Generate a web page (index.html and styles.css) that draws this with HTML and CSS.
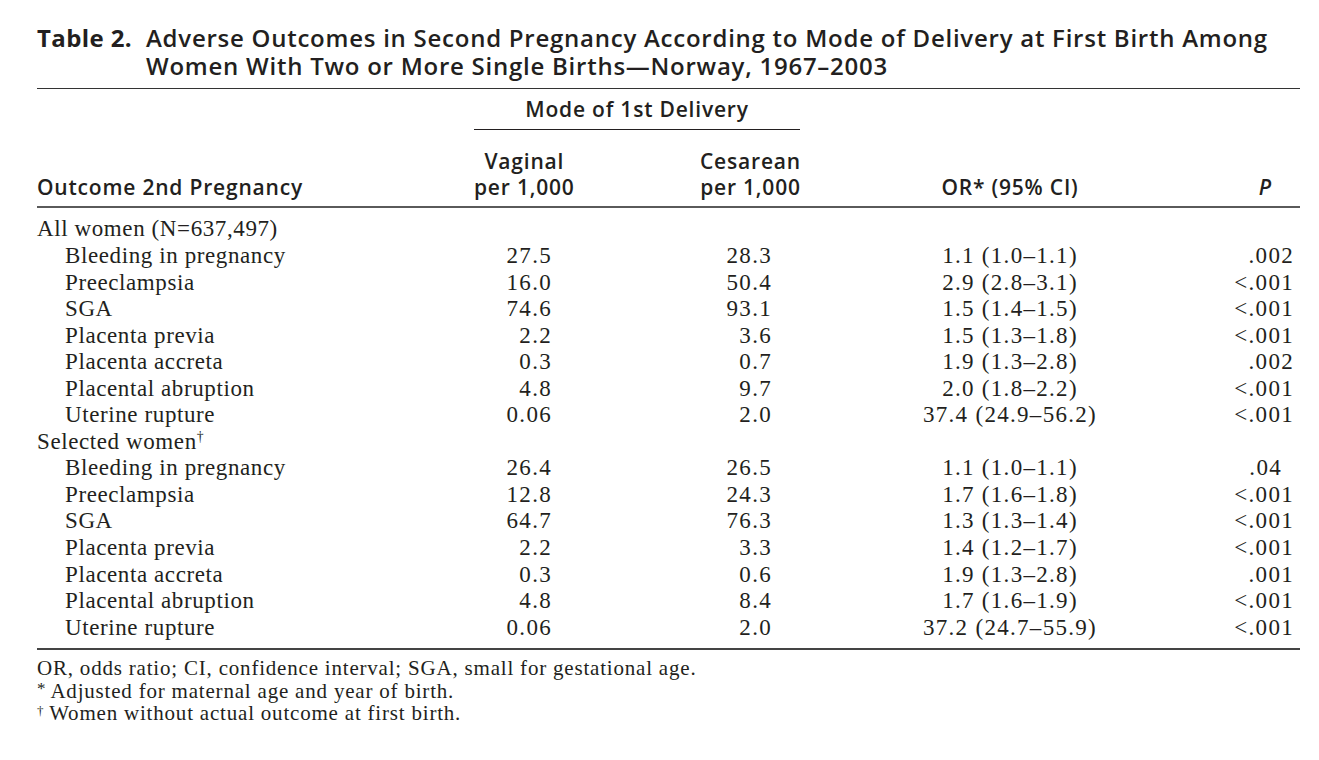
FILE: index.html
```html
<!DOCTYPE html>
<html lang="en">
<head>
<meta charset="utf-8">
<title>Table 2</title>
<link rel="stylesheet" href="styles.css">
</head>
<body>
<div class="page">
  <div class="title">
    <span class="title-label">Table 2.</span>
    <span class="title-text">Adverse Outcomes in Second Pregnancy According to Mode of Delivery at First Birth Among Women With Two or More Single Births—Norway, 1967–2003</span>
  </div>
  <table class="data">
    <colgroup>
      <col class="c-outcome">
      <col class="c-vag">
      <col class="c-ces">
      <col class="c-or">
      <col class="c-p">
    </colgroup>
    <thead>
      <tr class="hrow-a">
        <th></th>
        <th colspan="2" class="mode"><span>Mode of 1st Delivery</span></th>
        <th></th>
        <th></th>
      </tr>
      <tr class="hrow-b">
        <th class="h-outcome">Outcome 2nd Pregnancy</th>
        <th class="h-stack"><span class="stack">Vaginal<br>per 1,000</span></th>
        <th class="h-stack"><span class="stack">Cesarean<br>per 1,000</span></th>
        <th class="h-or">OR* (95% CI)</th>
        <th class="h-p"><i>P</i></th>
      </tr>
    </thead>
    <tbody>
      <tr class="group first"><td colspan="5">All women (N=637,497)</td></tr>
      <tr><td class="lbl">Bleeding in pregnancy</td><td class="vag">27.5</td><td class="ces">28.3</td><td class="or">1.1 (1.0–1.1)</td><td class="p">.002</td></tr>
      <tr><td class="lbl">Preeclampsia</td><td class="vag">16.0</td><td class="ces">50.4</td><td class="or">2.9 (2.8–3.1)</td><td class="p">&lt;.001</td></tr>
      <tr><td class="lbl">SGA</td><td class="vag">74.6</td><td class="ces">93.1</td><td class="or">1.5 (1.4–1.5)</td><td class="p">&lt;.001</td></tr>
      <tr><td class="lbl">Placenta previa</td><td class="vag">2.2</td><td class="ces">3.6</td><td class="or">1.5 (1.3–1.8)</td><td class="p">&lt;.001</td></tr>
      <tr><td class="lbl">Placenta accreta</td><td class="vag">0.3</td><td class="ces">0.7</td><td class="or">1.9 (1.3–2.8)</td><td class="p">.002</td></tr>
      <tr><td class="lbl">Placental abruption</td><td class="vag">4.8</td><td class="ces">9.7</td><td class="or">2.0 (1.8–2.2)</td><td class="p">&lt;.001</td></tr>
      <tr><td class="lbl">Uterine rupture</td><td class="vag">0.06</td><td class="ces">2.0</td><td class="or">37.4 (24.9–56.2)</td><td class="p">&lt;.001</td></tr>
      <tr class="group"><td colspan="5">Selected women<sup>†</sup></td></tr>
      <tr><td class="lbl">Bleeding in pregnancy</td><td class="vag">26.4</td><td class="ces">26.5</td><td class="or">1.1 (1.0–1.1)</td><td class="p p-short">.04</td></tr>
      <tr><td class="lbl">Preeclampsia</td><td class="vag">12.8</td><td class="ces">24.3</td><td class="or">1.7 (1.6–1.8)</td><td class="p">&lt;.001</td></tr>
      <tr><td class="lbl">SGA</td><td class="vag">64.7</td><td class="ces">76.3</td><td class="or">1.3 (1.3–1.4)</td><td class="p">&lt;.001</td></tr>
      <tr><td class="lbl">Placenta previa</td><td class="vag">2.2</td><td class="ces">3.3</td><td class="or">1.4 (1.2–1.7)</td><td class="p">&lt;.001</td></tr>
      <tr><td class="lbl">Placenta accreta</td><td class="vag">0.3</td><td class="ces">0.6</td><td class="or">1.9 (1.3–2.8)</td><td class="p">.001</td></tr>
      <tr><td class="lbl">Placental abruption</td><td class="vag">4.8</td><td class="ces">8.4</td><td class="or">1.7 (1.6–1.9)</td><td class="p">&lt;.001</td></tr>
      <tr class="last"><td class="lbl">Uterine rupture</td><td class="vag">0.06</td><td class="ces">2.0</td><td class="or">37.2 (24.7–55.9)</td><td class="p">&lt;.001</td></tr>
    </tbody>
  </table>
  <div class="notes">
    <p>OR, odds ratio; CI, confidence interval; SGA, small for gestational age.</p>
    <p><span class="mark">*</span> Adjusted for maternal age and year of birth.</p>
    <p><span class="mark dag">†</span> Women without actual outcome at first birth.</p>
  </div>
</div>
</body>
</html>
```
FILE: styles.css
```css
html, body {
  margin: 0;
  padding: 0;
  background: #ffffff;
}

.page {
  padding: 0 19px 0 37px;
  width: 1263px;
  color: #231f20;
}

.title {
  display: flex;
  padding-top: 24px;
  font-family: "Open Sans", sans-serif;
  font-size: 24px;
  line-height: 27.7px;
  font-weight: 600;
  letter-spacing: 0.75px;
  color: #231f20;
  padding-bottom: 9px;
  border-bottom: 1px solid #333;
}

.title-label {
  flex: 0 0 109px;
  font-weight: 700;
  letter-spacing: 0.4px;
}

.title-text {
  flex: 1;
}

.data {
  width: 1263px;
  border-collapse: collapse;
  table-layout: fixed;
}

.c-outcome { width: 437px; }
.c-vag { width: 226px; }
.c-ces { width: 100px; }
.c-or { width: 420px; }
.c-p { width: 80px; }

.data th {
  font-family: "Open Sans", sans-serif;
  font-size: 21px;
  font-weight: 600;
  letter-spacing: 0.8px;
  padding: 0;
  line-height: 25.7px;
  vertical-align: bottom;
  color: #231f20;
}

.hrow-a th {
  height: 33px;
  padding-bottom: 7px;
}

.mode {
  text-align: center;
  border-bottom: 1px solid #231f20;
}

.hrow-b th {
  height: 70px;
  padding-bottom: 6px;
  border-bottom: 2px solid #5a5a5a;
}

.h-outcome {
  text-align: left;
}

.h-stack {
  text-align: left;
}

.stack {
  display: inline-block;
  text-align: center;
}

.h-or {
  text-align: center;
}

.h-p {
  text-align: right;
  padding-right: 28px !important;
}

.data td {
  font-family: "Liberation Serif", serif;
  font-size: 23px;
  letter-spacing: 0.6px;
  line-height: 26.55px;
  padding: 0;
  white-space: nowrap;
}

.group td {
  text-align: left;
}

.group.first td {
  padding-top: 8px;
}

.lbl {
  padding-left: 28px !important;
}

.data td.vag,
.data td.ces,
.data td.or,
.data td.p {
  letter-spacing: 1.3px;
}

.vag {
  text-align: right;
  padding-right: 148px !important;
}

.ces {
  text-align: right;
  padding-right: 28px !important;
}

.or {
  text-align: center;
}

.p {
  text-align: right;
  padding-right: 6px !important;
}

.p-short {
  padding-right: 18px !important;
}

.last td {
  padding-bottom: 7px;
  border-bottom: 2px solid #444;
}

sup {
  font-size: 0.6em;
  line-height: 0;
  vertical-align: 0.6em;
}

.notes {
  font-family: "Liberation Serif", serif;
  font-size: 21px;
  letter-spacing: 0.8px;
  line-height: 22.5px;
  padding-top: 7px;
}

.notes p {
  margin: 0;
}

.mark {
  display: inline-block;
  font-size: 17px;
  line-height: 0;
  vertical-align: 4px;
  letter-spacing: 0;
}

.mark.dag {
  font-size: 13px;
  vertical-align: 5px;
}
```
